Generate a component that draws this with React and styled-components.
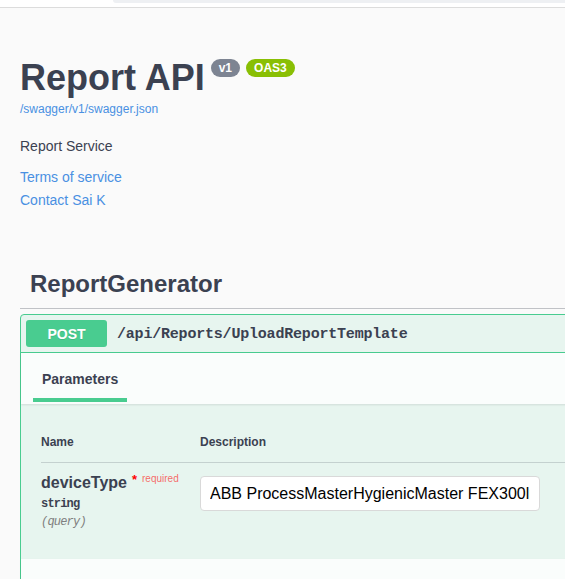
import React from 'react'
import styled, { createGlobalStyle } from 'styled-components'

const GlobalStyle = createGlobalStyle`
  html, body {
    margin: 0;
    padding: 0;
    background: #fff;
  }
  body {
    font-family: "Liberation Sans", Arial, sans-serif;
    color: #3b4151;
  }
  * {
    box-sizing: border-box;
  }
`

const Page = styled.div`
  display: grid;
  grid-template-columns: 565px 1fr;
  height: 100vh;
  overflow: hidden;
`

const Column = styled.div`
  background: #fafafa;
  overflow: hidden;
`

const TopStrip = styled.div`
  height: 8px;
  background: #fff;
  border-bottom: 1px solid #dcdcdc;
  padding-left: 113px;
`

const SearchEdge = styled.div`
  height: 3px;
  background: #eef0f3;
  border-bottom-left-radius: 8px;
`

const Info = styled.div`
  padding: 52px 20px 0;
`

const TitleRow = styled.div`
  display: flex;
  align-items: flex-start;
  gap: 6px;
`

const Title = styled.h2`
  margin: 0;
  font-size: 36px;
  line-height: 36px;
  font-weight: 700;
  color: #3b4151;
`

const Badge = styled.span`
  margin-top: -1px;
  padding: 0 8px;
  height: 18px;
  display: inline-flex;
  align-items: center;
  border-radius: 57px;
  background: ${p => p.$color};
  color: #fff;
  font-size: 12px;
  font-weight: 700;
`

const SpecLink = styled.a`
  display: block;
  margin-top: 6px;
  font-size: 12px;
  line-height: 14px;
  color: #4990e2;
  text-decoration: none;
`

const Description = styled.p`
  margin: 20px 0 0;
  font-size: 14px;
  line-height: 20px;
`

const InfoLinks = styled.div`
  margin-top: 10px;
  display: flex;
  flex-direction: column;
`

const InfoLink = styled.a`
  font-size: 14px;
  line-height: 23px;
  color: #4990e2;
  text-decoration: none;
`

const Section = styled.section`
  margin-top: 47px;
  padding-left: 20px;
  margin-right: -60px;
`

const TagHeading = styled.h3`
  margin: 0;
  padding: 10px 20px 9px 10px;
  font-size: 24px;
  line-height: 30px;
  font-weight: 700;
  border-bottom: 1px solid rgba(59, 65, 81, 0.3);
`

const OpBlock = styled.div`
  margin-top: 5px;
  border: 1px solid #49cc90;
  border-radius: 4px;
  background: rgba(73, 204, 144, 0.1);
`

const Summary = styled.div`
  display: flex;
  align-items: center;
  padding: 5px;
  border-bottom: 1px solid #49cc90;
`

const Method = styled.span`
  min-width: 81px;
  height: 27px;
  display: inline-flex;
  align-items: center;
  justify-content: center;
  border-radius: 3px;
  background: #49cc90;
  color: #fff;
  font-size: 14px;
  font-weight: 700;
  text-shadow: 0 1px 0 rgba(0, 0, 0, 0.1);
`

const Path = styled.span`
  padding: 2px 10px 0;
  font-family: "Liberation Mono", "DejaVu Sans Mono", monospace;
  font-size: 15px;
  font-weight: 700;
  letter-spacing: -0.2px;
  color: #3b4151;
`

const SectionHeader = styled.div`
  display: flex;
  align-items: flex-end;
  min-height: ${p => p.$height || 51}px;
  padding: 16px 0 2px 12px;
  background: rgba(255, 255, 255, 0.8);
  box-shadow: 0 1px 2px rgba(0, 0, 0, 0.1);
`

const Tab = styled.h4`
  margin: 0;
  padding: 0 9px 9px;
  font-size: 14px;
  line-height: 20px;
  font-weight: 700;
  border-bottom: 4px solid #49cc90;
`

const ParamsBody = styled.div`
  padding: 31px 0 29px 20px;
`

const ParamsTable = styled.div`
  display: grid;
  grid-template-columns: 159px 1fr;
`

const HeadCell = styled.div`
  padding-bottom: 12px;
  font-size: 12px;
  line-height: 15px;
  font-weight: 700;
  border-bottom: 1px solid rgba(59, 65, 81, 0.2);
`

const NameCell = styled.div`
  padding-top: 6px;
  display: flex;
  flex-direction: column;
`

const ParamName = styled.div`
  font-size: 16px;
  line-height: 20px;
  font-weight: 700;
`

const Star = styled.span`
  padding: 0 5px;
  color: red;
  font-size: 13px;
  vertical-align: 4px;
`

const Required = styled.span`
  color: rgba(255, 0, 0, 0.6);
  font-size: 10px;
  font-weight: 400;
  vertical-align: 6px;
`

const ParamType = styled.div`
  padding: 5px 0;
  font-family: "Liberation Mono", "DejaVu Sans Mono", monospace;
  font-size: 12px;
  line-height: 12px;
  letter-spacing: -0.8px;
  font-weight: 700;
`

const ParamIn = styled.div`
  font-family: "Liberation Mono", "DejaVu Sans Mono", monospace;
  font-size: 12px;
  line-height: 15px;
  letter-spacing: -0.8px;
  font-style: italic;
  color: #808080;
`

const ValueCell = styled.div`
  padding-top: 13px;
`

const TextInput = styled.input`
  width: 340px;
  height: 35px;
  padding: 0 9px;
  border: 1px solid #d9d9d9;
  border-radius: 4px;
  background: #fff;
  font-family: "Liberation Sans", Arial, sans-serif;
  font-size: 16px;
  color: #000;
  outline: none;
`

export default function App() {
  return (
    <Page>
      <GlobalStyle />
      <Column>
        <TopStrip>
          <SearchEdge />
        </TopStrip>
        <Info>
          <TitleRow>
            <Title>Report API</Title>
            <Badge $color="#7d8492">v1</Badge>
            <Badge $color="#89bf04">OAS3</Badge>
          </TitleRow>
          <SpecLink href="#">/swagger/v1/swagger.json</SpecLink>
          <Description>Report Service</Description>
          <InfoLinks>
            <InfoLink href="#">Terms of service</InfoLink>
            <InfoLink href="#">Contact Sai K</InfoLink>
          </InfoLinks>
        </Info>
        <Section>
          <TagHeading>ReportGenerator</TagHeading>
          <OpBlock>
            <Summary>
              <Method>POST</Method>
              <Path>/api/Reports/UploadReportTemplate</Path>
            </Summary>
            <SectionHeader>
              <Tab>Parameters</Tab>
            </SectionHeader>
            <ParamsBody>
              <ParamsTable>
                <HeadCell>Name</HeadCell>
                <HeadCell>Description</HeadCell>
                <NameCell>
                  <ParamName>
                    deviceType<Star>*</Star><Required>required</Required>
                  </ParamName>
                  <ParamType>string</ParamType>
                  <ParamIn>(query)</ParamIn>
                </NameCell>
                <ValueCell>
                  <TextInput
                    type="text"
                    readOnly
                    value="ABB ProcessMasterHygienicMaster FEX300lnline"
                  />
                </ValueCell>
              </ParamsTable>
            </ParamsBody>
            <SectionHeader $height={40} />
          </OpBlock>
        </Section>
      </Column>
    </Page>
  )
}
